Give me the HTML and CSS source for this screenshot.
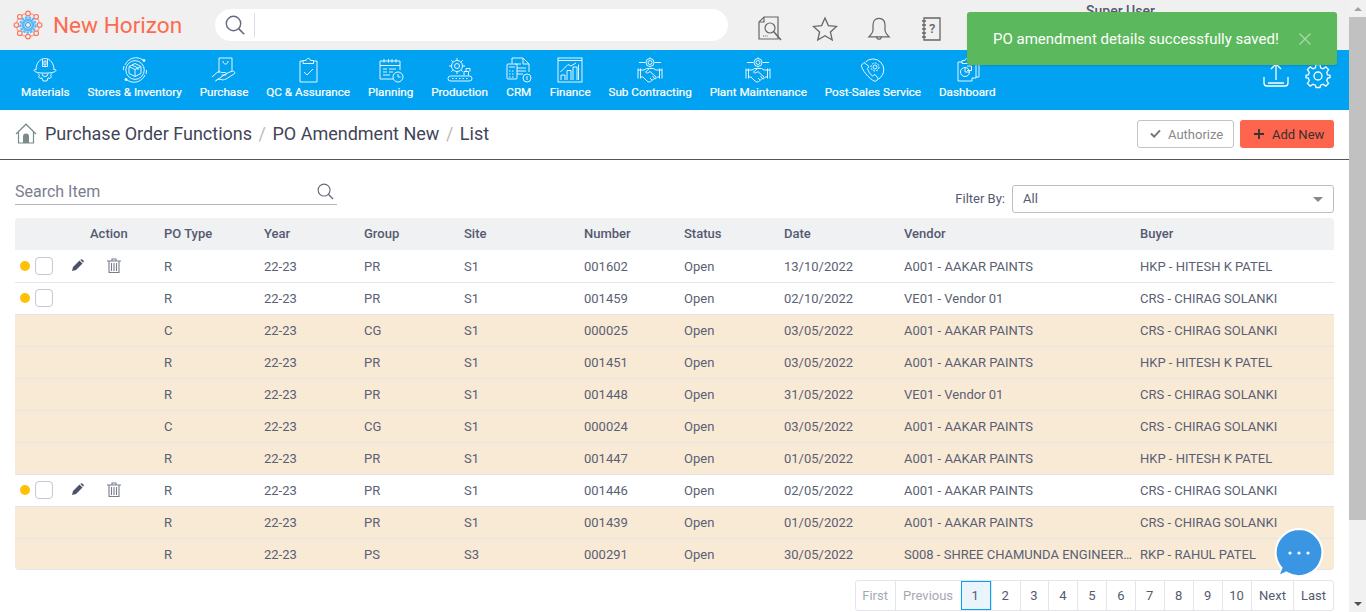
FILE: index.html
```html
<!DOCTYPE html>
<html lang="en">
<head>
<meta charset="utf-8">
<title>PO Amendment New</title>
<link rel="stylesheet" href="styles.css">
</head>
<body>
<div class="app">
  <div class="page">
    <header class="topbar">
      <div class="brand">
        <svg class="logo" viewBox="0 0 30 30" width="30" height="30">
          <circle cx="15" cy="15" r="11.600" fill="none" stroke="#fb7559" stroke-width=".9"/>
          <g fill="#f0f0f0" stroke="#fb7559" stroke-width="1.100">
            <circle cx="15" cy="3.400" r="2.300"/><circle cx="23.200" cy="6.800" r="2.300"/><circle cx="26.600" cy="15" r="2.300"/><circle cx="23.200" cy="23.200" r="2.300"/><circle cx="15" cy="26.600" r="2.300"/><circle cx="6.800" cy="23.200" r="2.300"/><circle cx="3.400" cy="15" r="2.300"/><circle cx="6.800" cy="6.800" r="2.300"/>
          </g>
          <circle cx="15" cy="15" r="7.600" fill="none" stroke="#5db8f5" stroke-width="2.200" stroke-dasharray="2.600 1"/>
          <circle cx="15" cy="15" r="5" fill="none" stroke="#5db8f5" stroke-width="3"/>
          <circle cx="15" cy="15" r="2.500" fill="#f0f0f0" stroke="#2f8fd6" stroke-width="1"/>
        </svg>
        <span class="brand-name">New Horizon</span>
      </div>
      <div class="search">
        <svg class="search-icon" viewBox="0 0 20 20" width="20" height="20"><circle cx="8.500" cy="8.500" r="7.200" fill="none" stroke="#666c80" stroke-width="1.400"/><path d="M13.600 13.600 19.200 19.200" stroke="#666c80" stroke-width="1.600"/></svg>
        <span class="search-divider"></span>
      </div>
      <div class="top-icons">
        <svg viewBox="0 0 24 26" width="24" height="26" fill="none" stroke="#666" stroke-width="1.200"><path d="M6 1H20V23H1V6Z"/><path d="M6 1V6H1"/><circle cx="12" cy="12" r="5"/><path d="M15.600 15.600 23 24" stroke-width="1.500"/><path d="M5 20H10" stroke-dasharray="1.200 1"/></svg>
        <svg viewBox="0 0 26 26" width="26" height="26" fill="none" stroke="#666" stroke-width="1.300"><path d="M13 2 16.400 9.600 24.600 10.400 18.400 15.900 20.200 24 13 19.800 5.800 24 7.600 15.900 1.400 10.400 9.600 9.600Z"/></svg>
        <svg viewBox="0 0 26 26" width="24" height="26" fill="none" stroke="#666" stroke-width="1.300"><path d="M13 1.500C8.500 1.500 6.500 5 6.500 9V14C6.500 17 4.500 19 2 21.500H24C21.500 19 19.500 17 19.500 14V9C19.500 5 17.500 1.500 13 1.500Z"/><path d="M10.500 21.500A2.500 2.500 0 0 0 15.500 21.500"/></svg>
        <svg viewBox="0 0 20 24" width="20" height="24" fill="none" stroke="#666" stroke-width="1.300"><path d="M3 1H19V23H3Z"/><path d="M1 4H5M1 8H5M1 12H5M1 16H5M1 20H5"/><text x="8" y="16" class="help-mark">?</text></svg>
      </div>
      <div class="user">Super User</div>
    </header>

    <nav class="mainnav">
      <ul class="nav-list">
        <li class="nav-item">
          <svg viewBox="0 0 26 26" width="26" height="26"><path d="M4 13C4 6 8 1.500 13 1.500S22 6 22 13M10.500 2V9.500H15.500V2M12 4H14V8H12ZM2 13.500C2 17 24 17 24 13.500C24 12.500 23 12.500 22 12.500M4 12.500C3 12.500 2 12.500 2 13.500M6 16.500 7.500 18.500 6.500 20 8 21.500 10 20.800 11 24H15L16 20.800 18 21.500 19.500 20 18.500 18.500 20 16.500M10 16.500a3 3 0 0 0 6 0"/></svg>
          <span>Materials</span>
        </li>
        <li class="nav-item">
          <svg viewBox="0 0 26 26" width="26" height="26"><path d="M3 8A12 12 0 0 1 21 3M23 18A12 12 0 0 1 5 23M1.500 13A12 12 0 0 1 2 9M24.500 13A12 12 0 0 1 24 17M3.800 13A9.500 9.500 0 0 1 13 3.600 9.500 9.500 0 0 1 22.300 13 9.500 9.500 0 0 1 13 22.400 9.500 9.500 0 0 1 3.800 13Z"/><path d="M13 6.500 19 9.500V16.500L13 19.500 7 16.500V9.500ZM7 9.500 13 12.500 19 9.500M13 12.500V19.500M10 8 16 11V13"/><circle cx="22" cy="3.500" r="1" class="solid"/><circle cx="4" cy="22.500" r="1" class="solid"/></svg>
          <span>Stores &amp; Inventory</span>
        </li>
        <li class="nav-item">
          <svg viewBox="0 0 26 26" width="26" height="26"><path d="M8 16V1H21V14M12 4C12 8 17 8 17 4M1 20 6 15.500C7.500 14.500 9 14.500 10.500 15.500H14C16 15.500 16 18 14 18H10.500M14.500 17 20 14.500C23 13.500 25 15.500 23 17L15 22C13 23 11.500 23 10 22.500L7 22 4.500 24Z"/></svg>
          <span>Purchase</span>
        </li>
        <li class="nav-item">
          <svg viewBox="0 0 26 26" width="26" height="26"><path d="M8 4H5V25H22V4H18.500M8 6.500V3.500H11C11 0.800 15.500 0.800 15.500 3.500H18.500V6.500ZM9 15 12 18 18 12"/></svg>
          <span>QC &amp; Assurance</span>
        </li>
        <li class="nav-item">
          <svg viewBox="0 0 26 26" width="26" height="26"><path d="M15 22H2V4H22V13M2 8.500H22M6 2V5.500M10.500 2V5.500M14 2V5.500M18 2V5.500M5 12H9M11 12H18M5 15H9M11 15H15M5 18H12"/><circle cx="20" cy="20" r="5"/><path d="M20 17V20H22.500"/></svg>
          <span>Planning</span>
        </li>
        <li class="nav-item">
          <svg viewBox="0 0 26 26" width="26" height="26"><circle cx="10" cy="9" r="2.500"/><circle cx="10" cy="9" r="5.500"/><path d="M10 1V3.500M10 14.500V17M2 9H4.500M15.500 9H18M4.300 3.300 6 5M14 13 15.700 14.700M15.700 3.300 14 5M6 13 4.300 14.700M17 18.500V14.500H21.500V18.500M19 14.500V11.500H23V14.500"/><rect x="1" y="19" width="24" height="5" rx="2.500"/><path d="M5 21.500H21" stroke-dasharray="1.500 2"/></svg>
          <span>Production</span>
        </li>
        <li class="nav-item">
          <svg viewBox="0 0 26 26" width="26" height="26"><path d="M6 6.500V1H17L23 7V15M17 1V7H23M9 7H15M11 11H20M11 14H20M11 17H17"/><rect x="1" y="7" width="10" height="15" rx="1"/><path d="M3 10H9M3 14H4.500M6 14H7.500M3 17H4.500M6 17H7.500M3 20H4.500M6 20H7.500"/><circle cx="21" cy="21" r="4"/><path d="M21 19V23"/></svg>
          <span>CRM</span>
        </li>
        <li class="nav-item">
          <svg viewBox="0 0 26 26" width="26" height="26"><rect x="1" y="1" width="24" height="24"/><path d="M1 3.500H25M4 23V18H8V23M10 23V13.500H14V23M16 23V10H20V23M21.500 23V7.500M3.500 15 11 7.500 14 9 19 6"/></svg>
          <span>Finance</span>
        </li>
        <li class="nav-item">
          <svg viewBox="0 0 26 26" width="26" height="26"><circle cx="13" cy="5.500" r="2"/><circle cx="13" cy="5.500" r="4"/><path d="M2 5.500H8.500M17.500 5.500H24M13 .5V1.500M13 9.500V10.500M1 11.500V21.500M3.500 11.500V21.500M1 13H7L9.500 11.500H12M25 11.500V21.500M22.500 11.500V21.500M25 13H19L16.500 11.500H12.500L8.500 15C9.500 16.500 11.500 16 13 14.500L19 20C20 21.500 18 22.500 17 21.500M3.500 20H6L10 24C11.500 25.500 13.500 25 14.500 24L17 21.500M13 21 15 23M15.500 19 17.500 21.500M22.500 20H20"/></svg>
          <span>Sub Contracting</span>
        </li>
        <li class="nav-item">
          <svg viewBox="0 0 26 26" width="26" height="26"><circle cx="13" cy="5.500" r="2"/><circle cx="13" cy="5.500" r="4"/><path d="M2 5.500H8.500M17.500 5.500H24M13 .5V1.500M13 9.500V10.500M1 11.500V21.500M3.500 11.500V21.500M1 13H7L9.500 11.500H12M25 11.500V21.500M22.500 11.500V21.500M25 13H19L16.500 11.500H12.500L8.500 15C9.500 16.500 11.500 16 13 14.500L19 20C20 21.500 18 22.500 17 21.500M3.500 20H6L10 24C11.500 25.500 13.500 25 14.500 24L17 21.500M13 21 15 23M15.500 19 17.500 21.500M22.500 20H20"/></svg>
          <span>Plant Maintenance</span>
        </li>
        <li class="nav-item">
          <svg viewBox="0 0 26 26" width="26" height="26"><path d="M4 5.500 1.500 8C1 12 9 22 15 24.500L18.500 22 15 17.500 12.500 19C10 17.500 8 13.500 7.500 11.500L9 9.500Z"/><path d="M5.500 5A10.500 10.500 0 1 1 20.500 20.500L18.500 22"/><circle cx="15" cy="10" r="2"/><circle cx="15" cy="10" r="4" stroke-dasharray="2 1"/></svg>
          <span>Post-Sales Service</span>
        </li>
        <li class="nav-item">
          <svg viewBox="0 0 26 26" width="26" height="26"><path d="M8 5H4V24H18V21M8 3.500H11C11 1 15 1 15 3.500H18V6.500H8ZM18 5H22V21H18M22 7H25V20H22"/><circle cx="11" cy="15" r="4.500"/><path d="M11 10.500V15H15.500M13 9H17.500V13.500H13"/></svg>
          <span>Dashboard</span>
        </li>
      </ul>
      <div class="nav-tools">
        <svg viewBox="0 0 26 24" width="26" height="24"><path d="M13 17V1.500M8 6 13 1 18 6M1 14V20C1 22 2 23 4 23H22C24 23 25 22 25 20V14M5 20H21" stroke-width="1.300"/></svg>
        <svg viewBox="0 0 26 26" width="26" height="26"><circle cx="13" cy="13" r="4" stroke-width="1.300"/><path d="M11 1.500H15L15.600 4.800 18 5.800 20.800 3.900 23.600 6.700 21.700 9.500 22.700 11.900 25 12.300V14.700L22.700 15.100 21.700 17.500 23.600 20.300 20.800 23.100 18 21.200 15.600 22.200 15 24.500H11L10.400 22.200 8 21.200 5.200 23.100 2.400 20.300 4.300 17.500 3.300 15.100 1 14.700V12.300L3.300 11.900 4.300 9.500 2.400 6.700 5.200 3.900 8 5.800 10.400 4.800Z" stroke-width="1.300"/></svg>
      </div>
    </nav>

    <section class="crumbbar">
      <div class="crumbs">
        <svg class="home" viewBox="0 0 22 21" width="22" height="21"><path d="M1 11 11 1.200 21 11M3.500 9V20H18.500V9" fill="none" stroke="#7b8b8d" stroke-width="1.200"/><path d="M8 20V13.500A3 3 0 0 1 14 13.500V20Z" fill="#7b8b8d"/></svg>
        <span>Purchase Order Functions</span>
        <span class="sep">/</span>
        <span>PO Amendment New</span>
        <span class="sep">/</span>
        <span>List</span>
      </div>
      <div class="crumb-actions">
        <button class="btn btn-auth"><svg viewBox="0 0 12 10" width="11" height="9"><path d="M1 5 4.500 8.500 11 1.500" fill="none" stroke="#777" stroke-width="2.200"/></svg><span>Authorize</span></button>
        <button class="btn btn-add"><svg viewBox="0 0 10 10" width="10" height="10"><path d="M5 0V10M0 5H10" stroke="#333" stroke-width="1.800"/></svg><span>Add New</span></button>
      </div>
    </section>

    <section class="filters">
      <div class="search-item">
        <span>Search Item</span>
        <svg viewBox="0 0 18 18" width="17" height="17"><circle cx="7.500" cy="7.500" r="6.300" fill="none" stroke="#666c80" stroke-width="1.200"/><path d="M12 12 17 17" stroke="#666c80" stroke-width="1.400"/></svg>
      </div>
      <div class="filter-by">
        <label>Filter By:</label>
        <div class="select"><span>All</span><i class="caret"></i></div>
      </div>
    </section>

    <table class="grid">
      <colgroup>
        <col class="c-status"><col class="c-action"><col class="c-100"><col class="c-100"><col class="c-100"><col class="c-120"><col class="c-100"><col class="c-100"><col class="c-120"><col class="c-vendor"><col class="c-buyer">
      </colgroup>
      <thead>
        <tr><th></th><th class="th-action">Action</th><th>PO Type</th><th>Year</th><th>Group</th><th>Site</th><th>Number</th><th>Status</th><th>Date</th><th>Vendor</th><th>Buyer</th></tr>
      </thead>
      <tbody>
        <tr>
          <td><div class="mark"><i class="dot"></i><i class="check"></i></div></td>
          <td><div class="acts"><svg class="pen" viewBox="0 0 12 12" width="12" height="12"><path d="M0 12 1 8 7.500 1.500 10.500 4.500 4 11ZM8.300 .8C9.200 0 10 0 11 1S12 2.800 11.200 3.700Z" fill="#4d5268"/></svg><svg class="bin" viewBox="0 0 14 15" width="14" height="15" fill="none" stroke="#777c8e" stroke-width="1.100"><path d="M0 3H14M5 3V1H9V3M2 3V14.500H12V3M4.500 5V13M7 5V13M9.500 5V13"/></svg></div></td>
          <td>R</td><td>22-23</td><td>PR</td><td>S1</td><td>001602</td><td>Open</td><td>13/10/2022</td><td>A001 - AAKAR PAINTS</td><td>HKP - HITESH K PATEL</td>
        </tr>
        <tr>
          <td><div class="mark"><i class="dot"></i><i class="check"></i></div></td><td></td>
          <td>R</td><td>22-23</td><td>PR</td><td>S1</td><td>001459</td><td>Open</td><td>02/10/2022</td><td>VE01 - Vendor 01</td><td>CRS - CHIRAG SOLANKI</td>
        </tr>
        <tr class="done"><td></td><td></td><td>C</td><td>22-23</td><td>CG</td><td>S1</td><td>000025</td><td>Open</td><td>03/05/2022</td><td>A001 - AAKAR PAINTS</td><td>CRS - CHIRAG SOLANKI</td></tr>
        <tr class="done"><td></td><td></td><td>R</td><td>22-23</td><td>PR</td><td>S1</td><td>001451</td><td>Open</td><td>03/05/2022</td><td>A001 - AAKAR PAINTS</td><td>HKP - HITESH K PATEL</td></tr>
        <tr class="done"><td></td><td></td><td>R</td><td>22-23</td><td>PR</td><td>S1</td><td>001448</td><td>Open</td><td>31/05/2022</td><td>VE01 - Vendor 01</td><td>CRS - CHIRAG SOLANKI</td></tr>
        <tr class="done"><td></td><td></td><td>C</td><td>22-23</td><td>CG</td><td>S1</td><td>000024</td><td>Open</td><td>03/05/2022</td><td>A001 - AAKAR PAINTS</td><td>CRS - CHIRAG SOLANKI</td></tr>
        <tr class="done"><td></td><td></td><td>R</td><td>22-23</td><td>PR</td><td>S1</td><td>001447</td><td>Open</td><td>01/05/2022</td><td>A001 - AAKAR PAINTS</td><td>HKP - HITESH K PATEL</td></tr>
        <tr>
          <td><div class="mark"><i class="dot"></i><i class="check"></i></div></td>
          <td><div class="acts"><svg class="pen" viewBox="0 0 12 12" width="12" height="12"><path d="M0 12 1 8 7.500 1.500 10.500 4.500 4 11ZM8.300 .8C9.200 0 10 0 11 1S12 2.800 11.200 3.700Z" fill="#4d5268"/></svg><svg class="bin" viewBox="0 0 14 15" width="14" height="15" fill="none" stroke="#777c8e" stroke-width="1.100"><path d="M0 3H14M5 3V1H9V3M2 3V14.500H12V3M4.500 5V13M7 5V13M9.500 5V13"/></svg></div></td>
          <td>R</td><td>22-23</td><td>PR</td><td>S1</td><td>001446</td><td>Open</td><td>02/05/2022</td><td>A001 - AAKAR PAINTS</td><td>CRS - CHIRAG SOLANKI</td>
        </tr>
        <tr class="done"><td></td><td></td><td>R</td><td>22-23</td><td>PR</td><td>S1</td><td>001439</td><td>Open</td><td>01/05/2022</td><td>A001 - AAKAR PAINTS</td><td>CRS - CHIRAG SOLANKI</td></tr>
        <tr class="done last"><td></td><td></td><td>R</td><td>22-23</td><td>PS</td><td>S3</td><td>000291</td><td>Open</td><td>30/05/2022</td><td><div class="clip">S008 - SHREE CHAMUNDA ENGINEERING WORKS</div></td><td>RKP - RAHUL PATEL</td></tr>
      </tbody>
    </table>

    <div class="pager-row">
      <ul class="pager">
        <li class="off p-first">First</li><li class="off p-prev">Previous</li><li class="num on">1</li><li class="num">2</li><li class="num">3</li><li class="num">4</li><li class="num">5</li><li class="num">6</li><li class="num">7</li><li class="num">8</li><li class="num">9</li><li class="num">10</li><li class="p-next">Next</li><li class="p-last">Last</li>
      </ul>
    </div>

    <div class="toast">
      <span>PO amendment details successfully saved!</span>
      <svg viewBox="0 0 12 12" width="12" height="12"><path d="M.5 .5 11.500 11.500M11.500 .5 .5 11.500" stroke="#a9d8aa" stroke-width="1.300"/></svg>
    </div>

    <div class="chat">
      <svg viewBox="0 0 52 52" width="52" height="52"><path d="M26 2A23.500 23.500 0 1 1 13.500 45.500L5 49.500 8.500 41A23.500 23.500 0 0 1 26 2Z" fill="#3a96e2" stroke="#fff" stroke-width="2"/><circle cx="17" cy="26" r="1.600" fill="#fff"/><circle cx="26" cy="26" r="1.600" fill="#fff"/><circle cx="35" cy="26" r="1.600" fill="#fff"/></svg>
    </div>
  </div>

  <div class="scrollbar">
    <i class="arrow up"></i>
    <div class="track"><div class="thumb"></div></div>
    <i class="arrow down"></i>
  </div>
</div>
</body>
</html>
```

FILE: styles.css
```css
* { box-sizing: border-box; }
html, body { margin: 0; padding: 0; height: 100%; overflow: hidden; }
body { font-family: Roboto, "Liberation Sans", sans-serif; font-size: 13px; color: #555a70; background: #fff; }
ul { list-style: none; margin: 0; padding: 0; }

.app { display: flex; width: 1366px; height: 612px; }
.page { position: relative; width: 1349px; height: 612px; overflow: hidden; background: #fff; }

.scrollbar { width: 17px; display: flex; flex-direction: column; background: #f1f1f1; }
.arrow { height: 17px; display: flex; align-items: center; justify-content: center; flex: none; }
.arrow::before { content: ""; border-left: 4px solid transparent; border-right: 4px solid transparent; }
.arrow.up::before { border-bottom: 4px solid #a3a3a3; }
.arrow.down::before { border-top: 4px solid #505050; }
.track { flex: 1; }
.thumb { height: 503px; background: #c1c1c1; }

.topbar { height: 50px; background: #f0f0f0; display: flex; align-items: center; padding-left: 13px; position: relative; }
.brand { display: flex; align-items: center; width: 202px; gap: 10px; }
.logo { flex: none; }
.brand-name { font-size: 22.600px; color: #fd6b4f; white-space: nowrap; }
.search { width: 513px; height: 32px; background: #fff; border-radius: 16px; display: flex; align-items: center; padding-left: 10px; }
.search-divider { width: 1px; height: 24px; background: #dcdde6; margin-left: 9px; }
.top-icons { display: flex; align-items: center; margin-left: 30px; gap: 29.500px; padding-top: 8px; }
.help-mark { font-family: Roboto, sans-serif; font-size: 13px; fill: #666; stroke: none; font-weight: 500; }
.user { position: absolute; left: 1086px; top: 3px; font-size: 14px; font-weight: 500; color: #555a70; white-space: nowrap; }

.mainnav { height: 60px; background: #00a2f1; display: flex; justify-content: space-between; padding: 7px 18px 0 12px; }
.nav-list { display: flex; }
.nav-item { display: flex; flex-direction: column; align-items: center; padding: 0 8.950px; color: #fff; font-size: 11.700px; white-space: nowrap; -webkit-text-stroke: .2px #fff; }
.nav-item svg { fill: none; stroke: #fff; stroke-width: .9; flex: none; }
.nav-item svg .solid { fill: #fff; }
.nav-item span { margin-top: 1px; line-height: 16px; }
.nav-tools { display: flex; gap: 16px; padding-top: 6px; }
.nav-tools svg { fill: none; stroke: #fff; }

.crumbbar { height: 50px; border-bottom: 1px solid #555; display: flex; justify-content: space-between; align-items: center; padding: 0 15px 2px; }
.crumbs { display: flex; align-items: center; gap: 6.500px; font-size: 18px; color: #3f4559; }
.crumbs .home { margin-right: 1.500px; }
.crumbs .sep { color: #bbb; }
.crumb-actions { display: flex; gap: 6px; }
.btn { height: 28px; border-radius: 3px; font: 13px Roboto, sans-serif; display: flex; align-items: center; padding: 0; }
.btn span { position: relative; top: 1px; }
.btn-auth { width: 97px; background: #fff; border: 1px solid #c4c4c4; color: #8a8a8a; padding-left: 12px; gap: 7px; }
.btn-add { width: 94px; background: #fe654f; border: 0; color: #39302f; padding-left: 14px; gap: 8px; }

.filters { display: flex; justify-content: space-between; align-items: flex-start; padding: 19px 15px 0; height: 58px; }
.search-item { width: 322px; height: 26px; border-bottom: 1px solid #b5b5bb; display: flex; justify-content: space-between; align-items: center; padding: 0 3px 0 0; font-size: 16px; color: #7a7e8e; }
.filter-by { display: flex; align-items: center; gap: 7px; padding-top: 6px; color: #555a70; }
.filter-by label, .select span { position: relative; top: -1px; }
.select { width: 322px; height: 28px; border: 1px solid #bdbdbd; border-radius: 3px; display: flex; justify-content: space-between; align-items: center; padding: 0 10px; color: #555a70; }
.caret { border-left: 5px solid transparent; border-right: 5px solid transparent; border-top: 5px solid #888; }

.grid { width: 1319px; margin-left: 15px; border-collapse: separate; border-spacing: 0; table-layout: fixed; }
.c-status { width: 55px; }
.c-action { width: 94px; }
.c-100 { width: 100px; }
.c-120 { width: 120px; }
.c-vendor { width: 236px; }
.c-buyer { width: 194px; }
.grid th { height: 32px; background: #f0f1f3; text-align: left; font-weight: 500; font-size: 13px; color: #555a70; padding: 0 0 2px; }
.grid th:first-child { border-radius: 4px 0 0 0; }
.grid th:last-child { border-radius: 0 4px 0 0; }
.grid .th-action { padding-left: 20px; }
.grid td { height: 32px; padding: 0; border-top: 1px solid #e3e5ea; color: #5a5f74; white-space: nowrap; }
.grid tbody tr:first-child td { border-top-color: #fff; }
.grid tr.done td { background: #f9ead6; }
.grid tr.last td { border-bottom: 1px solid #e3e5ea; padding-top: 1px; }
.grid tr.last td:first-child { border-radius: 0 0 0 4px; }
.grid tr.last td:last-child { border-radius: 0 0 4px 0; }
.mark { display: flex; align-items: center; gap: 5px; padding: 0 0 2px 5px; }
.dot { width: 10px; height: 10px; border-radius: 50%; background: #ffc107; }
.check { width: 18px; height: 18px; border-radius: 4px; border: 1px solid #c5c8d6; background: #fff; }
.acts { display: flex; align-items: center; gap: 23px; padding: 0 0 3px 2px; }
.clip { width: 230px; overflow: hidden; text-overflow: ellipsis; }

.pager-row { display: flex; justify-content: flex-end; padding: 10px 15px 0 0; }
.pager { display: flex; height: 31px; border: 1px solid #e3e5ea; border-radius: 3px; }
.pager li { padding: 0; display: flex; align-items: center; justify-content: center; border-left: 1px solid #e3e5ea; color: #555a70; flex: none; }
.pager li:first-child { border-left: 0; }
.pager .p-first { width: 39px; }
.pager .p-prev { width: 66px; }
.pager .p-next { width: 42px; }
.pager .p-last { width: 40px; }
.pager .num { width: 28.950px; padding-right: 1px; }
.pager .off { color: #a6a9b5; }
.pager .on { width: 30px; border: 1px solid #00a2f1; background: #e9f4fd; }

.toast { position: absolute; left: 967px; top: 12px; width: 370px; height: 53px; background: #5cb85c; border-radius: 3px; color: #fff; display: flex; align-items: center; justify-content: space-between; padding: 0 26px; font-size: 15px; box-shadow: 0 1px 2px rgba(0,0,0,.12); }
.chat { position: absolute; left: 1273px; top: 527px; width: 52px; height: 52px; }
```
